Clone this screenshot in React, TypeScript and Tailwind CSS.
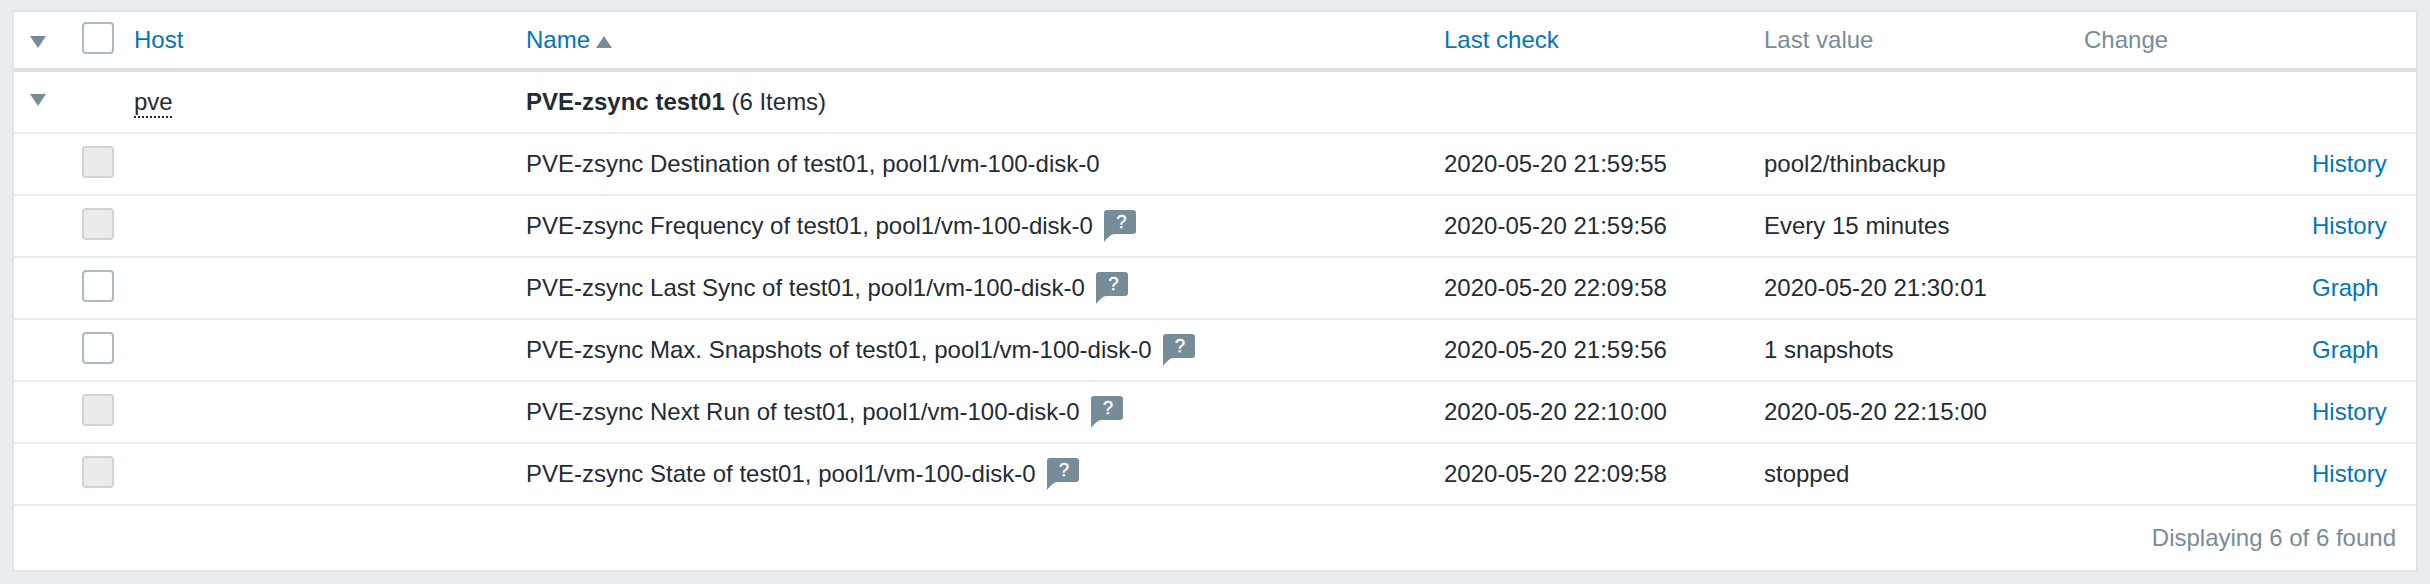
import type { ReactNode } from "react";

const COLUMNS =
  "grid grid-cols-[68px_52px_392px_918px_320px_320px_228px_1fr] items-start whitespace-nowrap";

type Item = {
  name: string;
  hint: boolean;
  checked: string;
  value: string;
  link: "History" | "Graph";
};

const items: Item[] = [
  { name: "Destination", hint: false, checked: "2020-05-20 21:59:55", value: "pool2/thinbackup", link: "History" },
  { name: "Frequency", hint: true, checked: "2020-05-20 21:59:56", value: "Every 15 minutes", link: "History" },
  { name: "Last Sync", hint: true, checked: "2020-05-20 22:09:58", value: "2020-05-20 21:30:01", link: "Graph" },
  { name: "Max. Snapshots", hint: true, checked: "2020-05-20 21:59:56", value: "1 snapshots", link: "Graph" },
  { name: "Next Run", hint: true, checked: "2020-05-20 22:10:00", value: "2020-05-20 22:15:00", link: "History" },
  { name: "State", hint: true, checked: "2020-05-20 22:09:58", value: "stopped", link: "History" },
];

function Arrow({ up = false, className = "" }: { up?: boolean; className?: string }) {
  return (
    <svg viewBox="0 0 16 12" className={`h-3 w-4 fill-[#768d99] ${className}`}>
      <path d={up ? "M0 12 8 0l8 12z" : "M0 0h16L8 12z"} />
    </svg>
  );
}

function Checkbox({ disabled = false }: { disabled?: boolean }) {
  return (
    <span
      role="checkbox"
      aria-checked="false"
      className={
        disabled
          ? "-mt-1 block size-8 rounded-[4px] border-2 border-[#ccd5d9] bg-[#ebebeb]"
          : "-mt-1 block size-8 rounded-[4px] border-2 border-[#acbbc2] bg-white"
      }
    />
  );
}

function Hint() {
  return (
    <span className="relative -mt-0.5 ml-[11.5px] block h-8 w-8 pl-0.5 text-center text-[18px] leading-6 text-white [-webkit-text-stroke:0.4px_white]">
      <svg viewBox="0 0 32 32" className="absolute inset-0 size-8 fill-[#768d99]">
        <path d="M3 0h26a3 3 0 0 1 3 3v18a3 3 0 0 1-3 3H11C7 24 4 27.500 0 32V3a3 3 0 0 1 3-3z" />
      </svg>
      <span className="relative">?</span>
    </span>
  );
}

function Link({ children }: { children: ReactNode }) {
  return (
    <a href="#" className="text-[#0275b8]">
      {children}
    </a>
  );
}

export default function App() {
  return (
    <div className="h-[584px] bg-[#e9edf0] px-3 pt-2.5 font-['Liberation_Sans',Arial,sans-serif] text-[24px] leading-7 text-[#1f2c33]">
      <div className="h-[562px] border-2 border-[#dfe4e7] bg-white">
        <div className={`${COLUMNS} h-[60px] border-b-4 border-[#dce1e4] pt-[14px] text-[#768d99]`}>
          <Arrow className="mt-[10px] ml-4" />
          <Checkbox />
          <Link>Host</Link>
          <div className="flex">
            <Link>Name</Link>
            <Arrow up className="mt-[10px] ml-[6px]" />
          </div>
          <Link>Last check</Link>
          <span>Last value</span>
          <span>Change</span>
        </div>

        <div className={`${COLUMNS} h-[62px] border-b-2 border-[#e9edf0] pt-4`}>
          <Arrow className="mt-[6px] ml-4" />
          <span />
          <span>
            <span className="inline-block h-[30px] bg-[repeating-linear-gradient(90deg,#1f2c33_0_2px,transparent_2px_4px)] bg-[length:100%_2px] bg-bottom bg-no-repeat">
              pve
            </span>
          </span>
          <span>
            <b>PVE-zsync test01</b> (6 Items)
          </span>
        </div>

        {items.map((item) => (
          <div key={item.name} className={`${COLUMNS} h-[62px] border-b-2 border-[#e9edf0] pt-4`}>
            <span />
            <Checkbox disabled={item.link === "History"} />
            <span />
            <div className="flex">
              <span>PVE-zsync {item.name} of test01, pool1/vm-100-disk-0</span>
              {item.hint && <Hint />}
            </div>
            <span>{item.checked}</span>
            <span>{item.value}</span>
            <span />
            <Link>{item.link}</Link>
          </div>
        ))}

        <div className="pt-[18px] pr-5 text-right text-[#768d99]">Displaying 6 of 6 found</div>
      </div>
    </div>
  );
}
